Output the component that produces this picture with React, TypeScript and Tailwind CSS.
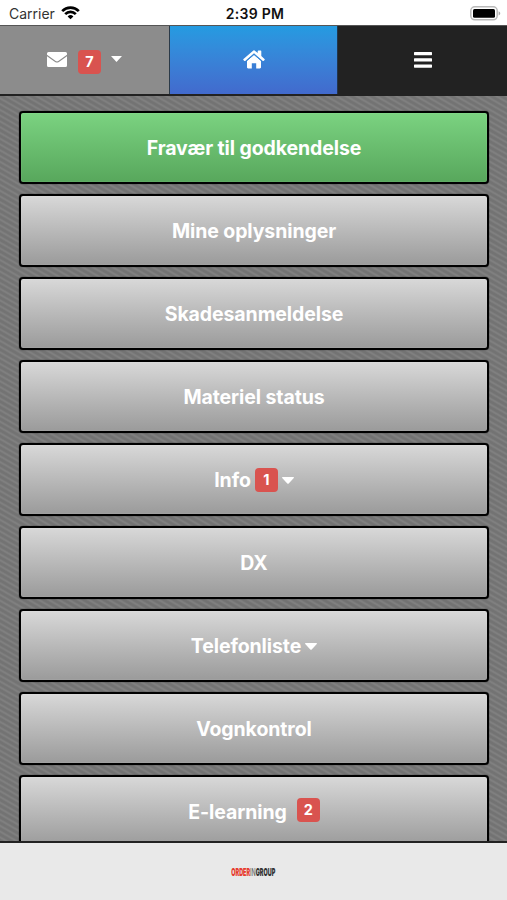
import React from 'react';

type MenuItem = {
  label: string;
  badge?: number;
  dropdown?: boolean;
  active?: boolean;
};

const items: MenuItem[] = [
  { label: 'Fravær til godkendelse', active: true },
  { label: 'Mine oplysninger' },
  { label: 'Skadesanmeldelse' },
  { label: 'Materiel status' },
  { label: 'Info', badge: 1, dropdown: true },
  { label: 'DX' },
  { label: 'Telefonliste', dropdown: true },
  { label: 'Vognkontrol' },
  { label: 'E-learning', badge: 2 },
];

function Caret() {
  return (
    <svg className="mt-px h-[7px] w-3 shrink-0" viewBox="0 0 12 7" fill="white">
      <path d="M.7 0h10.6c.6 0 .9.7.5 1.1L6.7 6.4a1 1 0 0 1-1.4 0L.2 1.1C-.2.7.1 0 .7 0Z" />
    </svg>
  );
}

function Badge({ value }: { value: number }) {
  return (
    <span className="flex h-6 w-[23px] shrink-0 items-center justify-center rounded-[4px] bg-[#d9534f] text-[14.5px] font-bold text-white">
      {value}
    </span>
  );
}

function StatusBar() {
  return (
    <div className="flex h-[25px] shrink-0 items-center bg-white text-[#111]">
      <div className="flex flex-1 items-center gap-[6px] pt-[3px] pl-[9px]">
        <span className="text-[14px] leading-none text-[#333]">Carrier</span>
        <svg className="mb-[2px] h-[14px] w-[19px]" viewBox="0 0 19 14" fill="none" stroke="black" strokeWidth="2.7">
          <path d="M1.2 5.1a11.8 11.8 0 0 1 16.6 0" />
          <path d="M4.2 8.1a7.5 7.5 0 0 1 10.6 0" />
          <path d="M6.6 10.4a4.1 4.1 0 0 1 5.8 0L9.5 13.3Z" fill="black" stroke="none" />
        </svg>
      </div>
      <div className="pt-[2px] text-[14px] leading-none font-semibold tracking-[0.3px]">2:39 PM</div>
      <div className="flex flex-1 justify-end pt-[1px] pr-[6px]">
        <svg className="h-[15px] w-[31px]" viewBox="0 0 31 15">
          <rect x=".8" y=".8" width="26.4" height="13" rx="4" fill="white" stroke="#b9b9b9" strokeWidth="1.5" />
          <rect x="3" y="3" width="22" height="8.8" rx="1.5" fill="black" />
          <path d="M28.6 5.2c2.2.8 2.2 3.4 0 4.2Z" fill="#aaa" />
        </svg>
      </div>
    </div>
  );
}

function NavBar() {
  return (
    <nav className="flex h-[71px] shrink-0 border-t border-t-[#555] border-b-2 border-b-[#222] bg-[#222]">
      <div className="flex w-[170px] items-center border-r border-r-[#2b3a48] bg-[#8c8c8c] pl-[47px]">
        <svg className="mb-px h-[15px] w-5" viewBox="0 0 20 15" fill="white">
          <path d="M1.5 0h17A1.5 1.5 0 0 1 20 1.5v1.3L11.3 9a2.2 2.2 0 0 1-2.6 0L0 2.8V1.5A1.5 1.5 0 0 1 1.5 0Z" />
          <path d="m0 4.2 8.1 5.7c1.2.8 2.6.8 3.8 0L20 4.2v9.3a1.5 1.5 0 0 1-1.5 1.5h-17A1.5 1.5 0 0 1 0 13.5Z" />
        </svg>
        <span className="mt-[4px] ml-[11px]">
          <Badge value={7} />
        </span>
        <svg className="mb-[3px] ml-[10px] h-[6px] w-[11px]" viewBox="0 0 11 6" fill="white">
          <path d="M0 0h11L5.5 6Z" />
        </svg>
      </div>
      <div className="flex w-[168px] items-center justify-center border-r border-r-[#22354b] bg-linear-to-b from-[#249be1] to-[#426acd]">
        <svg className="mb-px h-[19px] w-[22px]" viewBox="0 0 22 19" fill="white">
          <path d="m11 4.7 7 6v6.6c0 .7-.5 1.2-1.2 1.2h-3.6v-5.2H8.8v5.2H5.2c-.7 0-1.2-.5-1.2-1.2v-6.6Z" />
          <path d="M9.8.9a1.8 1.8 0 0 1 2.4 0l2.5 2.2V1.3c0-.4.3-.7.7-.7h2.2c.4 0 .7.3.7.7v4.8l3.2 2.8c.3.3.4.7.1 1l-.8.9c-.3.3-.7.3-1 .1L11 3.3l-8.8 7.6c-.3.2-.7.2-1-.1l-.8-.9c-.3-.3-.2-.7.1-1Z" />
          <path d="m3 11.4 8-6.9 8 6.9" fill="none" stroke="#3384d7" strokeWidth=".9" />
        </svg>
      </div>
      <div className="flex flex-1 items-center justify-center">
        <svg className="mb-px h-4 w-[18px]" viewBox="0 0 18 16" fill="white">
          <rect y="0" width="18" height="3.2" rx=".6" />
          <rect y="6.3" width="18" height="3.2" rx=".6" />
          <rect y="12.5" width="18" height="3.2" rx=".6" />
        </svg>
      </div>
    </nav>
  );
}

function MenuButton({ item }: { item: MenuItem }) {
  const colors = item.active ? 'from-[#7cd482] to-[#57a65b]' : 'from-[#dadada] to-[#999]';
  return (
    <button
      className={`flex h-[73px] w-full shrink-0 items-center justify-center rounded-[4px] border-2 border-black bg-linear-to-b bg-origin-border text-[19.5px] font-bold tracking-[-0.1px] text-white shadow-[inset_0_0_1px_rgba(255,255,255,0.5),0_0_1px_#000] ${colors}`}
    >
      <span className="mt-[3px] whitespace-nowrap">{item.label}</span>
      {item.badge && (
        <span className={item.dropdown ? 'mx-[4px] mt-px' : 'mb-[3px] ml-[10px]'}>
          <Badge value={item.badge} />
        </span>
      )}
      {item.dropdown && (
        <span className={item.badge ? '' : 'ml-[4px]'}>
          <Caret />
        </span>
      )}
    </button>
  );
}

export default function App() {
  return (
    <div className="flex h-[900px] w-[507px] flex-col overflow-hidden bg-white font-[Inter,sans-serif]">
      <StatusBar />
      <NavBar />
      <main className="flex min-h-0 flex-1 flex-col gap-[10px] overflow-hidden bg-[repeating-linear-gradient(30deg,#737373_0px,#737373_1.5px,#808080_3px,#808080_3.5px,#737373_5px)] pt-[15px] pr-[18px] pl-[19px]">
        {items.map((item) => (
          <MenuButton key={item.label} item={item} />
        ))}
      </main>
      <footer className="flex h-[59px] shrink-0 items-center justify-center border-t-2 border-t-[#222] bg-[#e9e9e9] pt-[3px]">
        <div className="flex w-[45px] justify-center">
          <div className="scale-x-[0.52] text-[10.5px] leading-none font-black whitespace-nowrap text-[#333]">
            <span className="text-[#e63b2e]">ORDER</span>
            <span className="font-medium text-[#666]">IN</span>
            <span>GROUP</span>
          </div>
        </div>
      </footer>
    </div>
  );
}
